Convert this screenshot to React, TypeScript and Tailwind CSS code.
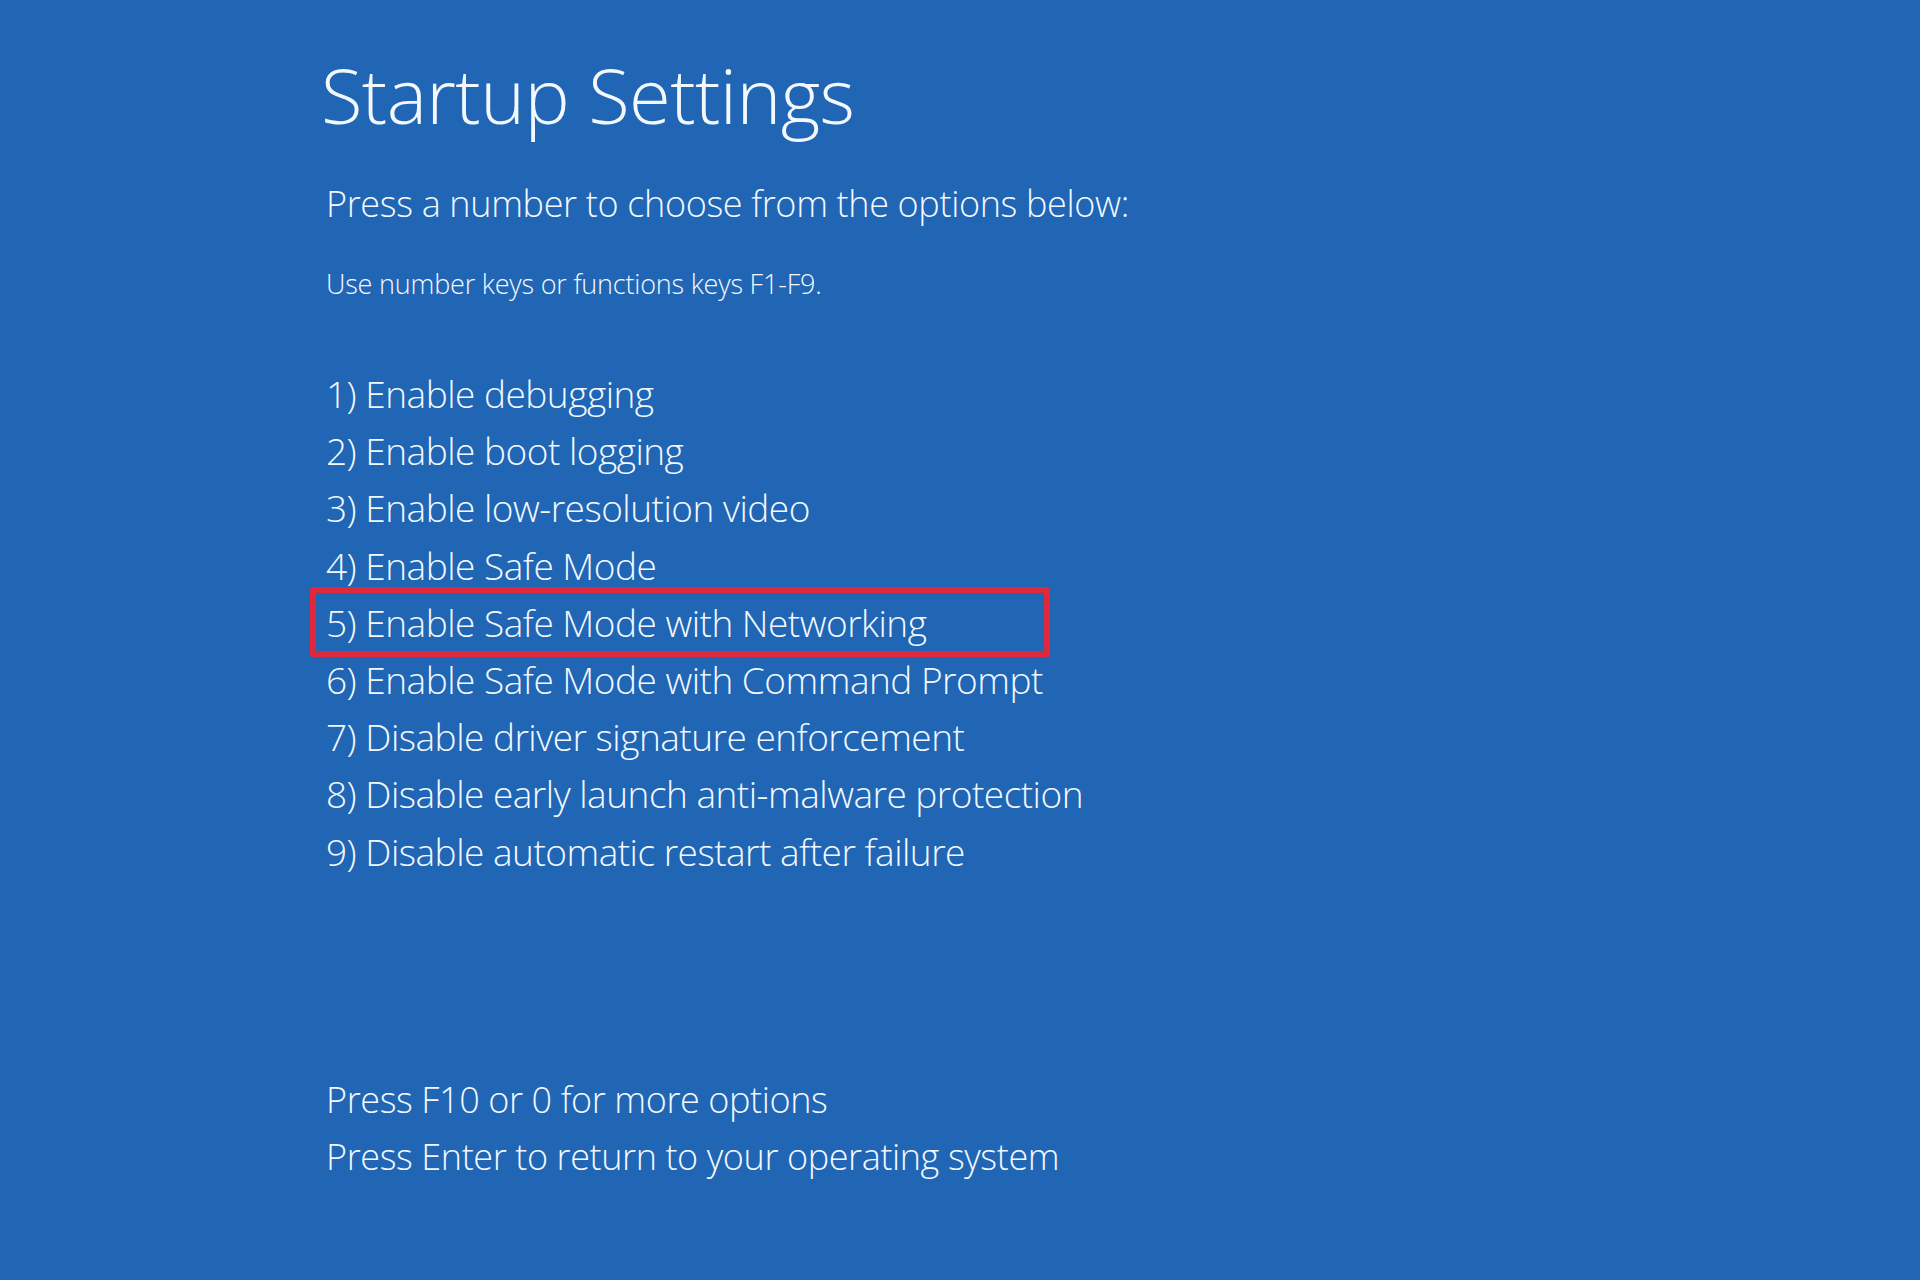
const options = [
  "1) Enable debugging",
  "2) Enable boot logging",
  "3) Enable low-resolution video",
  "4) Enable Safe Mode",
  "5) Enable Safe Mode with Networking",
  "6) Enable Safe Mode with Command Prompt",
  "7) Disable driver signature enforcement",
  "8) Disable early launch anti-malware protection",
  "9) Disable automatic restart after failure",
]

const App = () => {
  return (
    <div className="min-h-[1280px] w-[1920px] bg-[#2066b4] text-[#f3f8ff] font-['Open_Sans','Noto_Sans',sans-serif]">
      <div className="flex flex-col pl-[326px] pt-[47px]">
        <h1 className="-ml-[5px] text-[76px] font-light leading-[96px] tracking-[-0.6px]">
          Startup Settings
        </h1>

        <p className="mt-[36px] text-[36px] font-light leading-[50px] tracking-[-0.35px]">
          Press a number to choose from the options below:
        </p>
        <p className="mt-[37px] text-[27px] font-light leading-[36px] tracking-[-0.2px]">
          Use number keys or functions keys F1-F9.
        </p>

        <ul className="mt-[63px] flex flex-col">
          {options.map((opt, i) => (
            <li key={opt} className="relative text-[37px] font-light leading-[57.2px] tracking-[-0.5px]">
              {i === 4 && (
                <div className="absolute -left-[16px] top-[-7px] h-[70px] w-[740px] rounded-[3px] border-[6px] border-[#e0283c]" />
              )}
              {opt}
            </li>
          ))}
        </ul>

        <div className="mt-[191px] flex flex-col">
          <p className="text-[36px] font-light leading-[57px] tracking-[-0.4px]">Press F10 or 0 for more options</p>
          <p className="text-[36px] font-light leading-[57px] tracking-[-0.4px]">Press Enter to return to your operating system</p>
        </div>
      </div>
    </div>
  )
}

export default App
